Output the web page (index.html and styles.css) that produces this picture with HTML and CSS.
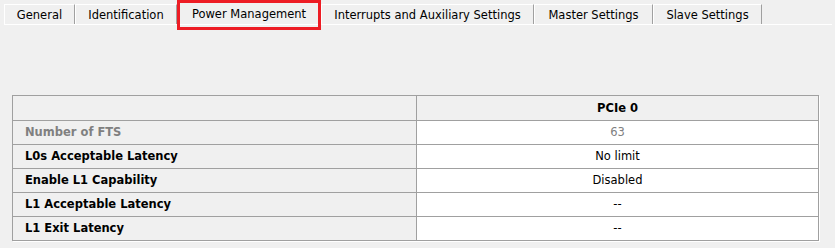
FILE: index.html
```html
<!doctype html>
<html>
<head>
<meta charset="utf-8">
<title>Power Management</title>
<link rel="stylesheet" href="styles.css">
</head>
<body>

<nav class="tabs">
  <div class="tab">General</div>
  <div class="tab">Identification</div>
  <div class="tab tab-active">Power Management</div>
  <div class="tab">Interrupts and Auxiliary Settings</div>
  <div class="tab">Master Settings</div>
  <div class="tab">Slave Settings</div>
</nav>

<table class="grid">
  <tr class="head">
    <th class="label"></th>
    <th>PCIe 0</th>
  </tr>
  <tr class="disabled">
    <th class="label">Number of FTS</th>
    <td>63</td>
  </tr>
  <tr>
    <th class="label">L0s Acceptable Latency</th>
    <td>No limit</td>
  </tr>
  <tr>
    <th class="label">Enable L1 Capability</th>
    <td>Disabled</td>
  </tr>
  <tr>
    <th class="label">L1 Acceptable Latency</th>
    <td>--</td>
  </tr>
  <tr>
    <th class="label">L1 Exit Latency</th>
    <td>--</td>
  </tr>
</table>

</body>
</html>
```

FILE: styles.css
```css
/* ---------- page ---------- */
html,body{margin:0;background:#f0f0f0}
body{
  width:835px;height:248px;overflow:hidden;
  font:11.5px/1 "DejaVu Sans",Tahoma,sans-serif;
  color:#000;
}

/* ---------- tab strip ---------- */
.tabs{
  display:flex;align-items:flex-start;
  margin-left:4px;width:828px;height:24px;
  border-bottom:1px solid #fff;
}
.tab{
  box-sizing:border-box;
  margin-top:4px;height:20px;
  display:flex;align-items:center;justify-content:center;
  padding-top:2px;
  border-top:1px solid #fff;
  border-left:1px solid #fff;
  border-right:1px solid #a0a0a0;
  white-space:nowrap;
}
.tab:nth-child(1){width:71px}
.tab:nth-child(2){width:102px}
.tab:nth-child(4){width:213px}
.tab:nth-child(5){width:119px}
.tab:nth-child(6){width:109px}

.tab-active{
  width:144px;height:30px;
  margin:0 0 -6px;
  border:3px solid #ed1c24;
  padding:0 0 1px;
  position:relative;
}

/* ---------- property grid ---------- */
.grid{
  margin:70px 0 0 12px;
  width:807px;
  border-collapse:collapse;
  border:1px solid #a0a0a0;
  box-shadow:1px 1px 0 #fff;
}
.grid th,.grid td{
  border:1px solid #a0a0a0;
  height:22px;padding:1px 0 0;
  font-weight:bold;
  text-align:center;
}
.grid td{
  background:#fff;
  font-weight:normal;
}
.grid .label{
  width:391px;
  text-align:left;padding-left:12px;
}
.grid .head th{height:23px}
.grid .disabled th,.grid .disabled td{color:#808080}
```
